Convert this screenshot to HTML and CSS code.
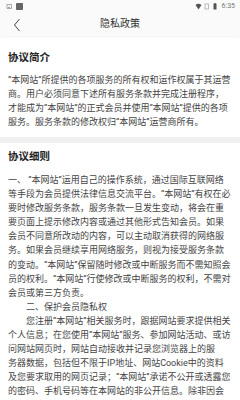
FILE: index.html
```html
<!DOCTYPE html>
<html lang="zh-CN">
<head>
<meta charset="utf-8">
<link rel="stylesheet" href="styles.css">
</head>
<body>
<div class="status">
  <svg class="st-left" width="22" height="9" viewBox="0 0 22 9">
    <rect x="1" y="2.5" width="4.5" height="4" fill="none" stroke="#9a9a9a" stroke-width="0.8"/>
    <path d="M1.5 6 L3 4.5 L4.5 6Z" fill="#9a9a9a"/>
    <rect x="10" y="1" width="7" height="7" rx="0.8" fill="#666"/>
  </svg>
  <div class="st-right">
    <svg width="26" height="9" viewBox="0 0 26 9">
      <path d="M0.5 3 Q3.5 0.5 6.5 3 L3.5 7.5Z" fill="#555"/>
      <rect x="10" y="2" width="3.5" height="5" fill="none" stroke="#aaa" stroke-width="0.8"/>
      <rect x="18.5" y="1.5" width="3" height="6" fill="#555"/>
      <rect x="19.3" y="1" width="1.4" height="0.8" fill="#555"/>
    </svg>
    <span class="time">6:35</span>
  </div>
</div>
<div class="header">
  <svg class="back" width="8" height="14" viewBox="0 0 8 14">
    <polyline points="6.5,1 1.5,7 6.5,13" fill="none" stroke="#444" stroke-width="1"/>
  </svg>
  <div class="htitle">隐私政策</div>
</div>
<section class="card card-first">
  <h2 class="ctitle">协议简介</h2>
  <p class="body">“本网站”所提供的各项服务的所有权和运作权属于其运营商。用户必须同意下述所有服务条款并完成注册程序，才能成为“本网站”的正式会员并使用“本网站”提供的各项服务。服务条款的修改权归“本网站”运营商所有。</p>
</section>
<section class="card">
  <h2 class="ctitle">协议细则</h2>
  <p class="body">一、 “本网站”运用自己的操作系统，通过国际互联网络等手段为会员提供法律信息交流平台。“本网站”有权在必要时修改服务条款，服务条款一旦发生变动，将会在重要页面上提示修改内容或通过其他形式告知会员。如果会员不同意所改动的内容，可以主动取消获得的网络服务。如果会员继续享用网络服务，则视为接受服务条款的变动。“本网站”保留随时修改或中断服务而不需知照会员的权利。“本网站”行使修改或中断服务的权利，不需对会员或第三方负责。</p>
  <p class="body indent">二、保护会员隐私权</p>
  <p class="body indent">您注册“本网站”相关服务时，跟据网站要求提供相关个人信息；在您使用“本网站”服务、参加网站活动、或访问网站网页时，网站自动接收并记录您浏览器上的服<br>务器数据，包括但不限于IP地址、网站Cookie中的资料及您要求取用的网页记录；“本网站”承诺不公开或透露您的密码、手机号码等在本网站的非公开信息。除非因会员本人的需要、法律或其他合法程序的要求、服务条款的改变或修订等。</p>
</section>
</body>
</html>
```
FILE: styles.css
```css
html, body {
  margin: 0;
  padding: 0;
}
body {
  width: 240px;
  height: 400px;
  overflow: hidden;
  background: #f0f0f0;
  font-family: Roboto, "Noto Sans CJK SC", sans-serif;
}
.status {
  height: 12px;
  background: #fafafa;
  display: flex;
  align-items: center;
  justify-content: space-between;
  padding: 0 5px 0 6px;
}
.st-left { display: block; }
.st-right {
  display: flex;
  align-items: center;
  gap: 1px;
}
.st-right svg { display: block; }
.time {
  font-size: 7px;
  color: #777;
  line-height: 9px;
}
.header {
  height: 24px;
  background: #fafafa;
  display: flex;
  align-items: center;
  justify-content: center;
  position: relative;
  box-shadow: 0 1px 2px rgba(0, 0, 0, 0.06);
  z-index: 1;
}
.back {
  position: absolute;
  left: 13px;
  top: 6px;
}
.htitle {
  font-size: 10px;
  color: #333;
  line-height: 14px;
}
.card {
  background: #fff;
  padding: 7.5px 9px 8px 8px;
}
.card-first {
  padding-top: 14.5px;
  padding-bottom: 7.6px;
  margin-bottom: 6px;
}
.ctitle {
  margin: 0 0 8.5px;
  font-size: 10.5px;
  line-height: 14px;
  font-weight: 700;
  color: #222;
}
.body {
  margin: 0;
  font-size: 9px;
  line-height: 14.1px;
  color: #444;
}
.indent {
  text-indent: 18px;
}
```
